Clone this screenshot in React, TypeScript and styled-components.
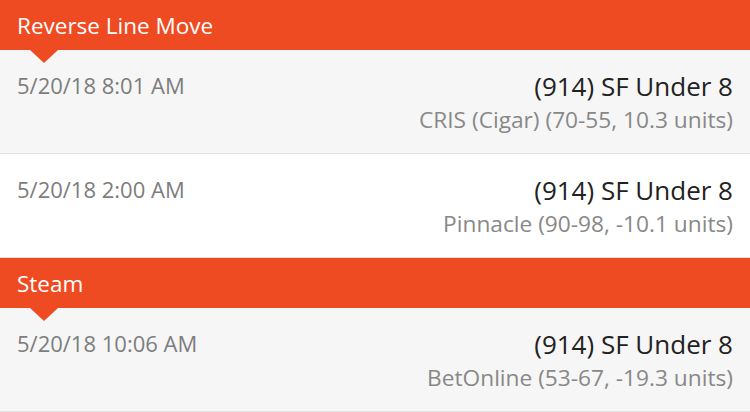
import styled, { createGlobalStyle } from "styled-components";

const GlobalStyle = createGlobalStyle`
  body {
    margin: 0;
    background: #ffffff;
    font-family: "Open Sans", "Lato", sans-serif;
  }
`;

const Feed = styled.div`
  width: 750px;
  display: flex;
  flex-direction: column;
`;

const SectionHeader = styled.div`
  position: relative;
  height: 50px;
  background: #ef4b22;
  color: #ffffff;
  font-size: 22.5px;
  display: flex;
  align-items: center;
  padding: 0 17px;
  box-sizing: border-box;

  &::after {
    content: "";
    position: absolute;
    left: 30px;
    top: 50px;
    border-left: 14px solid transparent;
    border-right: 14px solid transparent;
    border-top: 13px solid #ef4b22;
    z-index: 2;
  }
`;

const Row = styled.div<{ $shade: boolean }>`
  height: 104px;
  box-sizing: border-box;
  background: ${(p) => (p.$shade ? "#f6f6f6" : "#ffffff")};
  border-bottom: 1px solid #e2e2e2;
  display: flex;
  align-items: flex-start;
  justify-content: space-between;
  padding: 18px 17px 0;
`;

const Stamp = styled.div`
  color: #7d7d7d;
  font-size: 22px;
  line-height: 28px;
  padding-top: 3px;
`;

const Detail = styled.div`
  display: flex;
  flex-direction: column;
  align-items: flex-end;
  padding-top: 2px;
`;

const Pick = styled.div`
  color: #222222;
  font-size: 26px;
  line-height: 32px;
`;

const Source = styled.div`
  color: #888888;
  font-size: 22.7px;
  line-height: 28px;
  margin-top: 4px;
`;

type Alert = { time: string; pick: string; source: string };

const sections: { title: string; alerts: Alert[] }[] = [
  {
    title: "Reverse Line Move",
    alerts: [
      { time: "5/20/18 8:01 AM", pick: "(914) SF Under 8", source: "CRIS (Cigar) (70-55, 10.3 units)" },
      { time: "5/20/18 2:00 AM", pick: "(914) SF Under 8", source: "Pinnacle (90-98, -10.1 units)" },
    ],
  },
  {
    title: "Steam",
    alerts: [
      { time: "5/20/18 10:06 AM", pick: "(914) SF Under 8", source: "BetOnline (53-67, -19.3 units)" },
    ],
  },
];

export default function App() {
  return (
    <>
      <GlobalStyle />
      <Feed>
        {sections.map((s) => (
          <div key={s.title}>
            <SectionHeader>{s.title}</SectionHeader>
            {s.alerts.map((a, i) => (
              <Row key={a.time} $shade={i % 2 === 0}>
                <Stamp>{a.time}</Stamp>
                <Detail>
                  <Pick>{a.pick}</Pick>
                  <Source>{a.source}</Source>
                </Detail>
              </Row>
            ))}
          </div>
        ))}
      </Feed>
    </>
  );
}
